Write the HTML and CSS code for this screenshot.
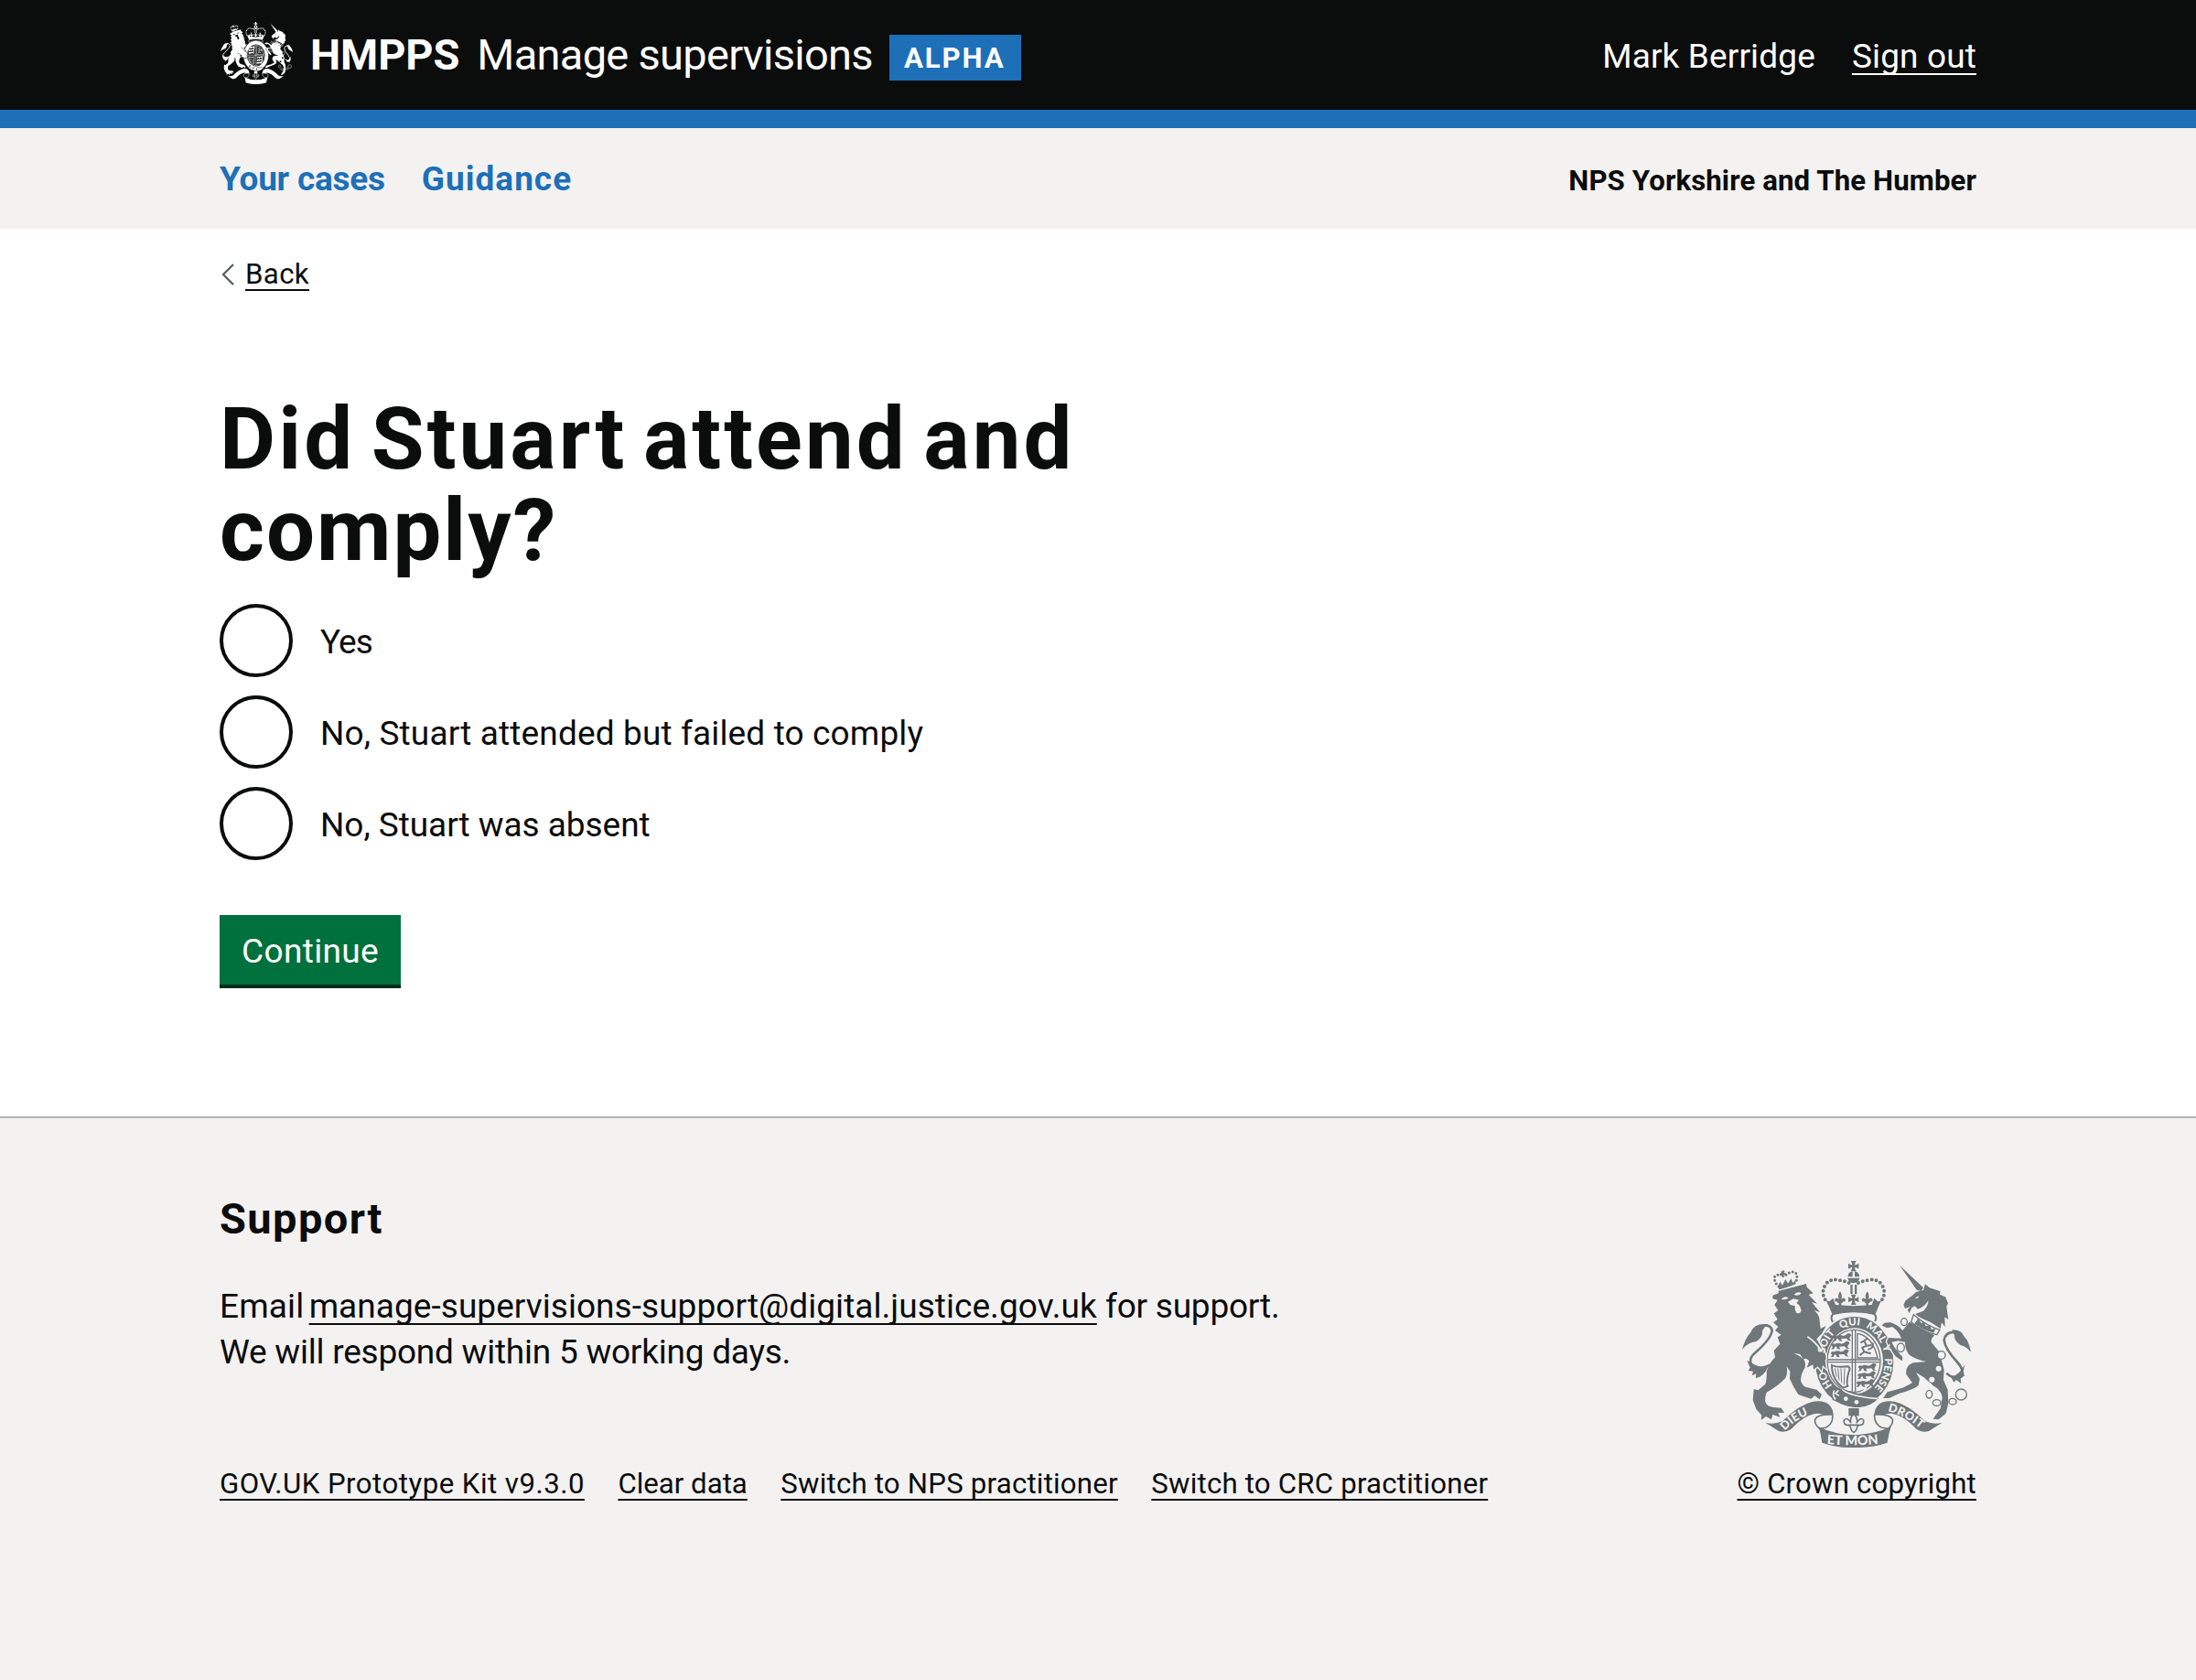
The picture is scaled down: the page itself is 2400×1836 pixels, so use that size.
FILE: index.html
```html
<!DOCTYPE html>
<html lang="en">
<head>
<meta charset="utf-8">
<title>Did Stuart attend and comply? - Manage supervisions</title>
<link rel="stylesheet" href="styles.css">
</head>
<body>
<svg class="defs" aria-hidden="true">
  <defs>
    <path id="cross" d="M-17-9Q-8-3-4-4Q-4-9-9-17H9Q4-9 4-4Q8-3 17-9V9Q8 3 4 4Q4 9 9 17H-9Q-4 9-4 4Q-8 3-17 9Z"/>
    <path id="fleur" d="M0-24Q9-10 4 2Q14-8 18 4Q16 12 10 9Q8 16 4 14V24H-4V14Q-8 16-10 9Q-16 12-18 4Q-14-8-4 2Q-9-10 0-24Z"/>
    <path id="walker" d="M2 4Q6-4 14 0Q24-6 36 0Q44-2 50-8Q60-10 62-2L56 6Q54 12 62 16L52 15L46 8Q34 8 28 9L32 18L22 16L18 8Q12 8 12 16L2 18L7 10Z"/>
    <symbol id="crest" viewBox="72 84 750 612" preserveAspectRatio="none">
      <g fill="currentColor">
        <!-- crown -->
        <use href="#cross" x="437" y="101"/>
        <path d="M434 118V136H418Q420 120 434 118ZM441 118V136H457Q455 120 441 118ZM418 140H457Q454 155 437 157Q421 155 418 140Z"/>
        <path class="pearls" d="M422 156Q404 148 388 147Q366 142 352 154Q338 168 337 188Q338 206 350 218M453 156Q471 148 487 147Q509 142 523 154Q537 168 538 188Q537 206 525 218"/>
        <path d="M427 162H434V192H427ZM441 162H448V192H441Z"/>
        <use href="#cross" x="437" y="211"/>
        <use href="#fleur" x="393" y="208"/>
        <use href="#fleur" x="482" y="208"/>
        <path d="M347 214L358 217L370 206L378 228L437 232L497 228L505 206L517 217L528 214Q518 235 509 258Q437 238 367 258Q358 235 347 214Z"/>
        <path class="line w6" d="M370 258Q437 242 505 258Q516 269 506 285Q437 262 369 285Q360 269 370 258Z"/>
        <!-- garter -->
        <ellipse class="garter" cx="440" cy="414" rx="131" ry="150"/>
        <ellipse class="void" cx="440" cy="412" rx="94" ry="108"/>
        <ellipse class="line w4" cx="438" cy="412" rx="87" ry="102"/>
        <path class="line w4" d="M433 312V512M443 312V512M352 408H524M352 416H524"/>
        <use href="#walker" x="368" y="330"/><use href="#walker" x="362" y="356"/><use href="#walker" x="360" y="382"/>
        <use href="#walker" x="450" y="428"/><use href="#walker" x="448" y="454"/><use href="#walker" x="444" y="480"/>
        <path class="line w4" d="M450 322Q500 332 516 402H450Z"/>
        <path class="line w6" d="M458 394L472 382L466 368L480 362L472 346L460 352M472 346L482 338M480 362L496 360M472 382L494 388M484 374Q504 372 500 352"/>
        <path class="line w6" d="M366 426Q380 434 420 430Q428 436 422 446Q412 480 418 494L404 500Q366 474 366 426Z"/>
        <path class="line w3" d="M376 436L382 464M386 436L390 476M396 436L398 484M408 436L406 490"/>
        <!-- buckle and strap -->
        <path d="M398 504Q450 520 520 534Q490 566 440 564Q400 560 370 536Z"/>
        <path class="line void-line" d="M392 502Q430 530 516 536M462 516L480 500"/>
        <path d="M366 504Q392 492 402 510Q412 524 384 546L368 540Z"/>
        <path class="line void-line" d="M374 508Q366 524 378 538M388 508L378 518L390 526"/>
        <g class="void"><circle cx="412" cy="536" r="7"/><circle cx="447" cy="547" r="7"/></g>
        <!-- lion -->
        <path class="pearls small" d="M192 168L184 160Q174 142 180 134Q192 126 204 130M216 130Q236 114 248 124Q256 138 246 158"/>
        <path d="M198 116L204 119L206 113L211 118L209 124L216 124L215 131L208 130L210 138L203 138L202 130L195 131L194 125L201 124ZM190 168L196 152L204 164L214 144L222 158L232 142L238 156L246 148L248 160L194 180Z"/>
        <path class="cut" d="M172 197L192 190L190 183L282 159L284 170L305 190L290 195L318 224L300 219L327 252L308 246Q322 258 325 272L329 306L347 297L334 322L316 340L336 374Q352 396 344 412L348 438L336 426L332 445L320 430L306 440L304 424L284 434L292 412L282 404L272 406L262 390L240 386Q266 396 276 410Q284 430 272 444Q264 458 264 476Q268 492 282 498L316 506L333 522L326 538L310 526L298 536L280 530L256 522L240 496L228 470L229 446L218 430Q222 454 214 468Q190 494 152 515Q146 530 148 546Q152 562 176 564L200 566L210 582L190 582L196 596L172 588L168 604L150 594L134 606L136 590L118 570L107 540L110 504L124 508L148 488Q154 470 152 446Q160 420 180 400L176 378L196 356L188 334L200 326L180 312L190 300L174 286L188 276L176 256L190 246L178 228L188 212L172 208Z"/>
        <path class="line w8" d="M164 424Q124 444 102 424Q92 402 116 384Q168 338 170 312Q166 292 138 296"/>
        <path d="M158 292Q112 286 100 318Q82 338 72 374Q90 352 118 348Q140 334 138 314Q146 298 158 292ZM88 410L98 434L92 444L108 446L104 460L118 454L116 468Q144 464 158 428Q130 438 112 424Z"/>
        <g class="void">
          <path d="M200 210Q212 196 224 206Q212 212 200 210ZM242 194Q256 182 266 190Q256 202 242 194ZM222 218L240 208L258 212L250 222L260 230L266 246Q262 260 250 254Q242 242 246 232L230 228Z"/>
          <path class="line void-line" d="M286 332Q312 348 334 382"/>
        </g>
        <!-- unicorn -->
        <path d="M588 98L666 172L660 182L645 180ZM601 228L608 214L632 196L642 186L666 180L672 160L686 172L704 178L722 184L720 194L738 202L747 222L742 234L748 276L736 268L737 300L726 286L722 306L704 294L688 284Q650 270 640 258L666 248Q684 230 682 214Q670 236 648 242L638 232L628 238L620 256L614 244L624 234L606 240Z"/>
        <path class="cut" d="M620 284L702 328Q690 340 692 350L718 382L734 440L732 474L746 506L748 550L740 584L716 604L698 602L722 568L728 532Q724 506 700 494L668 466L642 450L654 470L650 492Q636 506 588 518L554 534L534 534L548 514L598 500L630 484L610 456Q606 428 632 418L676 414Q640 406 620 392Q606 376 606 350L584 346L562 350L572 368L598 400L596 412L574 396L552 362L546 348L552 336L594 338Q584 312 564 300L548 304L530 296Q536 284 558 286Q584 294 598 312Z"/>
        <path class="line w4" d="M634 260Q672 294 720 310L710 326Q660 316 626 284Z"/>
        <path d="M640 286L650 270L658 288L668 284L674 298L688 294L692 308L706 306L700 320Q664 310 636 290Z"/>
        <path class="line w8" d="M742 452Q764 474 790 464Q804 446 776 414Q738 374 734 344Q738 316 770 318"/>
        <path d="M760 310Q790 308 800 332Q816 346 822 384Q810 366 788 360Q766 346 768 328ZM754 458Q776 470 802 424L796 452L802 460L788 468L790 486L774 474L766 482Z"/>
        <g class="line w4 ring">
          <ellipse cx="603" cy="284" rx="10" ry="12"/><ellipse cx="592" cy="368" rx="12" ry="14"/>
          <circle cx="725" cy="393" r="13"/><ellipse cx="685" cy="521" rx="10" ry="13"/>
          <ellipse cx="710" cy="549" rx="13" ry="10"/><ellipse cx="762" cy="545" rx="12" ry="10"/><circle cx="790" cy="522" r="18"/>
        </g>
        <g class="void"><circle cx="716" cy="437" r="9"/><circle cx="694" cy="473" r="9"/><path d="M638 206L652 198L648 206Z"/></g>
        <!-- pendant -->
        <path d="M421 567H455V592H421Z"/>
        <path class="outlined" d="M438 584Q452 600 448 614Q460 594 470 606Q472 624 456 622L450 626Q446 644 438 646Q430 644 426 626L420 622Q404 624 406 606Q416 594 428 614Q424 600 438 584ZM418 622H458"/>
        <!-- motto ribbon -->
        <path class="outlined" d="M368 588Q318 586 311 604Q308 620 326 634L348 630Q372 616 368 588ZM506 588Q558 586 565 604Q568 620 550 634L528 630Q504 616 506 588Z"/>
        <path d="M148 614Q176 622 204 610Q256 556 304 545Q366 536 371 588Q350 584 340 590Q330 582 310 585Q272 592 232 636Q214 648 192 642ZM728 614Q700 622 672 610Q620 556 572 545Q510 536 505 588Q526 584 536 590Q546 582 566 585Q604 592 644 636Q662 648 684 642Z"/>
        <path d="M323 628Q376 654 437 654Q500 654 560 628Q552 650 548 680Q500 697 437 696Q380 697 334 680Q330 650 323 628Z"/>
      </g>
    </symbol>
    <path id="arc-ho" d="M368 493A100 117 0 1 1 449 528.5"/>
    <path id="arc-soit" d="M342 388A100 117 0 1 1 449 528.5"/>
    <path id="arc-qui" d="M396 307A100 117 0 1 1 449 528.5"/>
    <path id="arc-mal" d="M476 303A100 117 0 0 1 449 528.5"/>
    <path id="arc-y" d="M531 363A100 117 0 0 1 449 528.5"/>
    <path id="arc-pense" d="M539.500 404A100 117 0 0 1 449 528.5"/>
    <path id="arc-dieu" d="M212 641Q258 590 330 578"/>
    <path id="arc-droit" d="M549 577Q604 588 664 640"/>
    <path id="arc-mon" d="M350 684Q437 692 540 682"/>
  </defs>
</svg>

<header class="header">
  <div class="container header-row">
    <a class="brand" href="#">
      <svg class="header-crest" role="img" aria-label="Royal coat of arms"><use href="#crest"/></svg>
      <span class="org">HMPPS</span>
      <span class="service">Manage supervisions</span>
      <strong class="tag">ALPHA</strong>
    </a>
    <div class="account">
      <span>Mark Berridge</span>
      <a class="link" href="#">Sign out</a>
    </div>
  </div>
</header>

<nav class="nav">
  <div class="container nav-row">
    <div class="nav-links"><a class="nav-cases" href="#">Your cases</a><a class="nav-guidance" href="#">Guidance</a></div>
    <span class="region">NPS Yorkshire and The Humber</span>
  </div>
</nav>

<main class="container main">
  <a class="back" href="#">
    <svg class="chevron" viewBox="0 0 14 24"><path d="M13 1L2 12L13 23"/></svg>
    <span class="link">Back</span>
  </a>
  <form>
    <fieldset>
      <legend><h1>Did Stuart attend and<br><span class="last-line">comply?</span></h1></legend>
      <div class="radios">
        <label><input type="radio" name="attend"><span class="short">Yes</span></label>
        <label><input type="radio" name="attend"><span>No, Stuart attended but failed to comply</span></label>
        <label><input type="radio" name="attend"><span class="absent">No, Stuart was absent</span></label>
      </div>
    </fieldset>
    <button type="button">Continue</button>
  </form>
</main>

<footer class="footer">
  <div class="container footer-row">
    <div class="support">
      <h2>Support</h2>
      <p>Email <a class="link email" href="#">manage-supervisions-support@digital.justice.gov.uk</a> <span class="tight">for support.</span><br><span class="tight">We will respond within 5 working days.</span></p>
      <div class="footer-links">
        <a class="link version" href="#">GOV.UK Prototype Kit v9.3.0</a>
        <a class="link clear" href="#">Clear data</a>
        <a class="link" href="#">Switch to NPS practitioner</a>
        <a class="link" href="#">Switch to CRC practitioner</a>
      </div>
    </div>
    <div class="copyright">
      <svg class="footer-crest" viewBox="72 84 750 612" role="img" aria-label="Royal coat of arms">
        <use href="#crest" x="72" y="84" width="750" height="612"/>
        <g class="motto">
          <text><textPath href="#arc-ho">HO</textPath></text>
          <text><textPath href="#arc-soit">SOIT</textPath></text>
          <text><textPath href="#arc-qui">QUI</textPath></text>
          <text><textPath href="#arc-mal">MAL</textPath></text>
          <text><textPath href="#arc-y">Y</textPath></text>
          <text><textPath href="#arc-pense">PENSE</textPath></text>
          <text class="wide"><textPath href="#arc-dieu">DIEU</textPath></text>
          <text class="wide"><textPath href="#arc-droit">DROIT</textPath></text>
          <text class="big"><textPath href="#arc-mon">ET MON</textPath></text>
        </g>
      </svg>
      <a class="link" href="#">© Crown copyright</a>
    </div>
  </div>
</footer>
</body>
</html>
```
FILE: styles.css
```css
* { box-sizing: border-box; }
body { margin: 0; background: #fff; color: #0b0c0c; font-family: Roboto, "Noto Sans", sans-serif; font-size: 37px; line-height: 50px; letter-spacing: 0.14px; }
a { color: inherit; text-decoration: none; }
h1, h2, p, fieldset, legend { margin: 0; padding: 0; border: 0; }
.defs { position: absolute; width: 0; height: 0; }
.container { width: 1920px; margin: 0 auto; }
.link { text-decoration: underline; text-decoration-thickness: 2px; text-underline-offset: 6px; text-decoration-skip-ink: none; }

.header { height: 140px; background: #0b0c0c; border-bottom: 20px solid #1d70b8; color: #fff; }
.header-row { display: flex; justify-content: space-between; }
.brand { display: flex; padding-top: 24px; font-size: 47px; line-height: 60px; white-space: nowrap; }
.header-crest { width: 79px; height: 68px; margin: 0 19px 0 1px; color: #fff; --field: #0b0c0c; }
.org, .service { padding-top: 6px; }
.org { font-weight: 700; letter-spacing: -0.1px; }
.service { margin-left: 19px; letter-spacing: -0.7px; }
.tag { width: 144px; height: 50px; margin: 14px 0 0 18px; padding: 1px 0 0 16px; background: #1d70b8; font-size: 31.2px; line-height: 50px; letter-spacing: 1.9px; }
.account { display: flex; gap: 40px; padding-top: 37px; }

.nav { height: 110px; background: #f3f2f1; }
.nav-row { display: flex; justify-content: space-between; align-items: baseline; padding-top: 31px; font-weight: 700; }
.nav-links { display: flex; gap: 40px; color: #1d70b8; }
.nav-cases { letter-spacing: -0.24px; }
.nav-guidance { letter-spacing: 1px; }
.region { font-size: 31.2px; letter-spacing: 0.1px; }

.main { height: 970px; padding-top: 25px; }
.back { display: flex; align-items: center; font-size: 31.2px; letter-spacing: 0.37px; }
.chevron { width: 14px; height: 24px; margin: 0 12px 0 2px; fill: none; stroke: #505a5f; stroke-width: 2.2; }
h1 { margin-top: 105px; font-size: 94px; line-height: 100px; letter-spacing: 3.1px; word-spacing: -9px; white-space: nowrap; }
.last-line { letter-spacing: 2px; }
.radios { display: grid; gap: 20px; margin-top: 30px; }
.radios label { display: flex; align-items: center; gap: 30px; height: 80px; }
.radios span { padding-top: 3px; }
.radios .short { letter-spacing: -1px; }
.radios .absent { letter-spacing: -0.05px; }
.radios input { appearance: none; width: 80px; height: 80px; margin: 0; border: 4px solid #0b0c0c; border-radius: 50%; }
button { display: block; width: 198px; height: 76px; margin: 60px 0 0; padding: 3px 0 0; border: 0; background: #00703c; box-shadow: 0 4px #002d18; color: #fff; font: inherit; letter-spacing: 0.33px; }

.footer { height: 616px; border-top: 2px solid #b1b4b6; background: #f3f2f1; }
.footer-row { display: flex; justify-content: space-between; }
.support { padding-top: 80px; white-space: nowrap; }
h2 { font-size: 47px; line-height: 60px; letter-spacing: 1.4px; }
p { margin-top: 41px; }
.email { margin-left: -4px; letter-spacing: 0.05px; }
.tight { letter-spacing: -0.23px; }
.footer-links { display: flex; gap: 36.5px; margin-top: 94px; font-size: 31.2px; letter-spacing: 0.21px; }
.version { letter-spacing: 0.48px; }
.clear { letter-spacing: 0; }
.copyright { display: flex; flex-direction: column; align-items: center; padding-top: 156px; font-size: 31.2px; letter-spacing: 0.19px; }
.footer-crest { width: 250px; height: 204px; margin-bottom: 15px; color: #6f777b; --field: #f3f2f1; }

.line { fill: none; stroke: currentColor; }
.w3 { stroke-width: 3; }
.w4 { stroke-width: 4; }
.w6 { stroke-width: 6; }
.w8 { stroke-width: 8; }
.pearls { fill: none; stroke: currentColor; stroke-width: 12; stroke-linecap: round; stroke-dasharray: 0 15; }
.pearls.small { stroke-width: 9; stroke-dasharray: 0 12; }
.void { fill: var(--field); }
.void-line { stroke: var(--field); stroke-width: 5; }
.ring { fill: var(--field); }
.garter { stroke: var(--field); stroke-width: 6; }
.cut { stroke: var(--field); stroke-width: 8; paint-order: stroke; }
.outlined { fill: var(--field); stroke: currentColor; stroke-width: 5; stroke-linejoin: round; }
.motto { fill: var(--field); font-family: Lato, sans-serif; font-size: 34px; font-weight: 900; letter-spacing: 0; }
.motto .wide { font-size: 38px; letter-spacing: 1px; }
.motto .big { font-size: 43px; }
```
